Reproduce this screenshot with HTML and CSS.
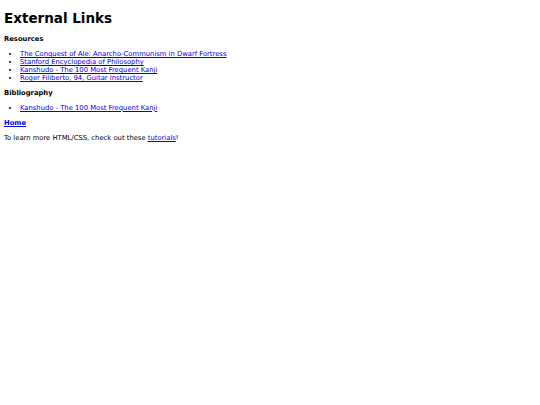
FILE: index.html
```html
<!DOCTYPE html>
<html>
<head>
<meta charset="utf-8">
<title>External Links</title>
<link rel="stylesheet" href="styles.css">
</head>
<body>
<h1 class="title">External Links</h1>
<h3 class="section first">Resources</h3>
<ul class="links">
<li><a href="#">The Conquest of Ale: Anarcho-Communism in Dwarf Fortress</a></li>
<li><a href="#">Stanford Encyclopedia of Philosophy</a></li>
<li><a href="#">Kanshudo - The 100 Most Frequent Kanji</a></li>
<li><a href="#">Roger Filiberto, 94, Guitar Instructor</a></li>
</ul>
<h3 class="section biblio">Bibliography</h3>
<ul class="links second">
<li><a href="#">Kanshudo - The 100 Most Frequent Kanji</a></li>
</ul>
<h3 class="section home"><a href="#">Home</a></h3>
<p class="note">To learn more HTML/CSS, check out these <a href="#">tutorials</a>!</p>
</body>
</html>
```
FILE: styles.css
```css
html, body {
  background: #ffffff;
}
body {
  margin: 4px;
  font-family: "DejaVu Sans", Verdana, sans-serif;
  font-size: 6.8px;
  color: #000000;
}
a {
  color: #0000ee;
}
.title {
  font-size: 13.5px;
  font-weight: bold;
  margin: 6px 0 0;
}
.section {
  font-size: 6.8px;
  font-weight: bold;
  margin: 7.5px 0 0;
}
.section.first {
  margin-top: 9px;
}
.section.biblio {
  margin-top: 6.5px;
}
.links {
  margin: 7.1px 0 0;
  padding-left: 16px;
}
.links.second {
  margin-top: 7.1px;
}
.home {
  margin-top: 7.4px;
}
.note {
  margin: 6.8px 0 0;
}
```
